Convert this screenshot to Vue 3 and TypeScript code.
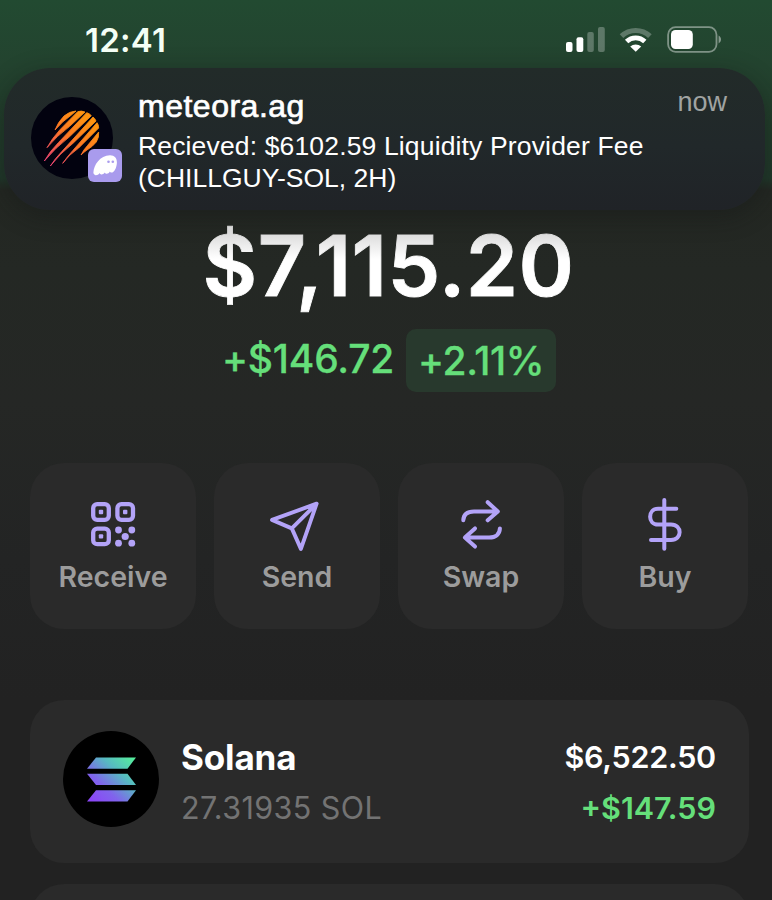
<script setup lang="ts">
interface Action {
  id: 'receive' | 'send' | 'swap' | 'buy'
  label: string
}

const actions: Action[] = [
  { id: 'receive', label: 'Receive' },
  { id: 'send', label: 'Send' },
  { id: 'swap', label: 'Swap' },
  { id: 'buy', label: 'Buy' },
]
</script>

<template>
  <main class="screen">
    <header class="status">
      <span class="time">12:41</span>
      <svg class="status-icons" width="156" height="28" viewBox="566 26 156 28">
        <g fill="#fff">
          <rect x="566" y="42" width="6.5" height="10" rx="2" />
          <rect x="576.5" y="37.3" width="6.8" height="14.7" rx="2" />
          <rect x="587.3" y="32" width="6.5" height="20" rx="2" opacity=".27" />
          <rect x="598" y="27" width="6.8" height="25" rx="2" opacity=".27" />
        </g>
        <path d="M621.5 36.200a20.500 20.500 0 0 1 28.400 0" fill="none" stroke="#fff" stroke-width="5.200" opacity=".27" />
        <path d="M626.600 41.400a13.300 13.300 0 0 1 18.200 0" fill="none" stroke="#fff" stroke-width="4.800" />
        <path d="M630.200 46.600a8 8 0 0 1 11 0l-5.500 5.200z" fill="#fff" />
        <rect x="668.100" y="27.200" width="48.400" height="24.600" rx="7.500" fill="none" stroke="#fff" stroke-opacity=".42" stroke-width="1.800" />
        <rect x="671" y="30" width="21.800" height="19" rx="4.500" fill="#fff" />
        <path d="M718.600 35.600c3.200 1.600 3.200 6.200 0 7.800z" fill="#fff" opacity=".45" />
      </svg>
    </header>

    <section class="notice">
      <div class="app-icon">
        <svg width="82" height="82" viewBox="-27 -27 246 246">
          <defs>
            <linearGradient id="meteor" gradientUnits="userSpaceOnUse" x1="140" y1="40" x2="20" y2="172">
              <stop offset="0" stop-color="#ff9410" />
              <stop offset=".4" stop-color="#fd7a22" />
              <stop offset=".7" stop-color="#f95e4c" />
              <stop offset="1" stop-color="#f5447c" />
            </linearGradient>
          </defs>
          <circle cx="96" cy="96" r="123" fill="#02020f" />
          <g fill="url(#meteor)" stroke="url(#meteor)" stroke-width="2.500" stroke-linejoin="round">
            <path d="M45 72Q54 48 72 30Q88 16 108 15L93 28Q68 45 45 72Z" />
            <path d="M21 125Q36 97 60 71L113 17Q124 13 135 18L89 61Q50 90 21 125Z" />
            <path d="M13 165Q30 135 55 110L140 20Q148 22 154 29L90 91Q44 127 13 165Z" />
            <path d="M31 180Q45 158 66 136L159 33Q165 37 168 45L100 111Q59 143 31 180Z" />
            <path d="M68 172Q81 153 98 134L171 50Q176 56 176 66L116 126Q87 146 68 172Z" />
            <path d="M123 147Q130 132 143 118L176 78Q178 93 169 108Q158 122 141 132Q132 138 123 147Z" />
          </g>
        </svg>
        <svg class="badge" width="34" height="33" viewBox="0 0 34 33">
          <rect width="34" height="33" rx="6" fill="#a99bed" />
          <path d="M5.400 23.500C5.700 16.200 12 6.200 22 6.200c4.600 0 7 3 6.900 7.300-.1 4.200-1.800 8.300-4 9.700-1.500.8-2.700.2-3-.6-1 1.700-2.300 2.500-3.700 2.200-.9-.2-1.200-.8-1.200-1.300-1.400 1.500-3 2.300-4.300 1.700-.7-.3-.9-.8-.9-1.300-1.500 1.700-3.200 2.700-4.700 2.100-1.100-.4-1.700-1.300-1.700-2.500z" fill="#fff" />
          <circle cx="20.500" cy="12.800" r="1.300" fill="#a99bed" />
          <circle cx="24.800" cy="12.800" r="1.300" fill="#a99bed" />
        </svg>
      </div>
      <div class="notice-text">
        <div class="notice-head">
          <strong>meteora.ag</strong>
          <span class="when">now</span>
        </div>
        <p><span class="line-one">Recieved: $6102.59 Liquidity Provider Fee</span><br /><span class="line-two">(CHILLGUY-SOL, 2H)</span></p>
      </div>
    </section>

    <section class="balance">
      <h1>$7,115.20</h1>
      <div class="change">
        <span class="amount">+$146.72</span>
        <span class="pill"><span class="percent">+2.11%</span></span>
      </div>
    </section>

    <nav class="actions">
      <button v-for="action in actions" :key="action.id" class="action" type="button">
        <svg v-if="action.id === 'receive'" width="56" height="56" viewBox="85 497 56 56" fill="none" stroke="currentColor" stroke-width="4.300">
          <rect x="93.200" y="504.200" width="15.600" height="15.600" rx="4" />
          <rect x="117.400" y="504.200" width="15.600" height="15.600" rx="4" />
          <rect x="93.200" y="528.600" width="15.600" height="15.600" rx="4" />
          <g fill="currentColor" stroke="none">
            <rect x="98.800" y="509.800" width="4.400" height="4.400" rx="1" />
            <rect x="123" y="509.800" width="4.400" height="4.400" rx="1" />
            <rect x="98.800" y="534.200" width="4.400" height="4.400" rx="1" />
            <circle cx="118.500" cy="530" r="3.400" />
            <circle cx="131.800" cy="530" r="3.400" />
            <circle cx="125.200" cy="536.500" r="3.600" />
            <circle cx="118.500" cy="543.200" r="3.400" />
            <circle cx="131.800" cy="543.200" r="3.400" />
          </g>
        </svg>
        <svg v-else-if="action.id === 'send'" width="56" height="56" viewBox="269 497 56 56" fill="none" stroke="currentColor" stroke-width="3.900" stroke-linejoin="round" stroke-linecap="round">
          <path d="M272 519.900L316.600 503.700L300.900 548.900L291.800 528.400ZM291.800 528.400L316.600 503.700" />
        </svg>
        <svg v-else-if="action.id === 'swap'" width="56" height="56" viewBox="453 497 56 56" fill="none" stroke="currentColor" stroke-width="4" stroke-linejoin="round" stroke-linecap="round">
          <path d="M463.300 520.300C463.500 514.500 467.500 511.500 474 511.500H497.500M487.700 502.200L497.800 511.500L487.700 520.300" />
          <path d="M499.900 528.400C499.700 534.200 495.700 537.600 489.200 537.600H465M475 528.400L464.900 537.600L475 546.600" />
        </svg>
        <svg v-else width="56" height="56" viewBox="637 497 56 56" fill="none" stroke="currentColor" stroke-width="4" stroke-linecap="round">
          <path d="M664.300 500V548.800M676.300 508.800H658C647.500 508.800 647.500 524.500 658 524.500H671C682.500 524.500 682.500 540 671 540H651" />
        </svg>
        <span class="label">{{ action.label }}</span>
      </button>
    </nav>

    <section class="tokens">
      <article class="token">
        <svg class="coin" width="96" height="96" viewBox="0 0 96 96">
          <defs>
            <linearGradient id="sol" gradientUnits="userSpaceOnUse" x1="28" y1="68" x2="68" y2="25">
              <stop offset="0" stop-color="#8b47f7" />
              <stop offset=".3" stop-color="#8064ec" />
              <stop offset=".65" stop-color="#57b9c2" />
              <stop offset="1" stop-color="#55ed9c" />
            </linearGradient>
          </defs>
          <circle cx="48" cy="48" r="48" fill="#000" />
          <g fill="url(#sol)">
            <path d="M33 26.500H73L64.500 37.700H24Z" />
            <path d="M24 42.800H64.500L73 54H33Z" />
            <path d="M33 59.200H73L64.500 70.400H24Z" />
          </g>
        </svg>
        <div class="names">
          <span class="name">Solana</span>
          <span class="holding">27.31935 SOL</span>
        </div>
        <div class="values">
          <span class="value">$6,522.50</span>
          <span class="gain">+$147.59</span>
        </div>
      </article>
      <article class="token"></article>
    </section>
  </main>
</template>

<style>
body {
  background: #222;
}
</style>

<style scoped>
.screen {
  box-sizing: border-box;
  width: 772px;
  height: 900px;
  overflow: hidden;
  font-family: Inter, sans-serif;
  color: #fff;
  background: linear-gradient(180deg, #224a31 0, #23432f 66px, #213c2a 130px, #20382a 178px, #232722 190px, #242824 270px, #252725 400px, #232424 560px, #222 700px, #222 100%);
}

.status {
  display: flex;
  align-items: center;
  justify-content: space-between;
  box-sizing: border-box;
  height: 68px;
  padding: 12px 50px 0 85px;
}

.time {
  font-size: 33px;
  font-weight: 600;
  letter-spacing: .250px;
  color: #f4fff5;
}

.notice {
  display: flex;
  box-sizing: border-box;
  width: 761px;
  height: 142px;
  margin-left: 4px;
  padding: 19px 38px 0 27px;
  border-radius: 46px;
  background: linear-gradient(180deg, #222b29 0%, #21282a 55%, #202327 100%);
  box-shadow: 0 6px 24px rgba(20, 22, 21, .42);
  font-family: "Liberation Sans", Arial, sans-serif;
}

.app-icon {
  position: relative;
  width: 82px;
  height: 82px;
  margin-top: 10px;
}

.app-icon svg {
  display: block;
}

.app-icon .badge {
  position: absolute;
  left: 57px;
  top: 52px;
}

.notice-text {
  flex: 1;
  margin-left: 25px;
  white-space: nowrap;
}

.notice-head {
  display: flex;
  justify-content: space-between;
  height: 43px;
  line-height: 39px;
}

.notice-head strong {
  font-size: 32px;
  font-weight: 400;
  letter-spacing: .500px;
  -webkit-text-stroke: .700px #fff;
}

.when {
  font-size: 27px;
  line-height: 30px;
  color: #a0a3a2;
}

.notice p {
  margin: 0;
  font-size: 26.500px;
  line-height: 32px;
}

.line-one {
  letter-spacing: .150px;
}

.balance {
  display: flex;
  flex-direction: column;
  align-items: center;
  padding-top: 13px;
}

h1 {
  margin: 0 0 -10px 5px;
  padding-bottom: 10px;
  font-size: 84px;
  font-weight: 600;
  letter-spacing: .400px;
  line-height: 85px;
  background: linear-gradient(180deg, #d8d8d8 8px, #fff 36px);
  background-clip: text;
  color: transparent;
  -webkit-text-stroke: .900px transparent;
}

.change {
  display: flex;
  align-items: center;
  gap: 12px;
  margin: 21px 0 0 6px;
  font-size: 39px;
  font-weight: 500;
  letter-spacing: -.200px;
  line-height: 48px;
  color: #65df7a;
  -webkit-text-stroke: .300px #65df7a;
}

.amount {
  margin-top: -3px;
}

.pill {
  display: flex;
  align-items: center;
  justify-content: center;
  width: 150px;
  height: 63px;
  border-radius: 10px;
  background: #28392d;
}

.percent {
  letter-spacing: -.400px;
}

.actions {
  display: grid;
  grid-template-columns: repeat(4, 1fr);
  gap: 18px;
  margin: 71px 24px 0 30px;
}

.action {
  display: flex;
  flex-direction: column;
  align-items: center;
  height: 166px;
  padding: 34px 0 0;
  border: 0;
  border-radius: 34px;
  background: #2a2a2a;
  color: #b3a3f8;
  font: inherit;
}

.label {
  margin-top: 6px;
  font-size: 28.500px;
  font-weight: 600;
  line-height: 36px;
  color: #9c9c9c;
}

.tokens {
  display: flex;
  flex-direction: column;
  gap: 21px;
  margin: 71px 23px 0 30px;
}

.token {
  display: flex;
  box-sizing: border-box;
  height: 163px;
  padding: 31px 33px 0;
  border-radius: 34px;
  background: #2a2a2a;
}

.names,
.values {
  display: flex;
  flex-direction: column;
  line-height: 52px;
  white-space: nowrap;
}

.names {
  margin-left: 22px;
}

.values {
  flex: 1;
  align-items: flex-end;
}

.name {
  font-size: 35px;
  font-weight: 700;
  letter-spacing: -.150px;
}

.holding {
  font-size: 30.500px;
  letter-spacing: .400px;
  line-height: 50px;
  color: #737373;
}

.value {
  font-size: 30.500px;
  font-weight: 600;
  letter-spacing: -.250px;
}

.gain {
  font-size: 30.500px;
  font-weight: 600;
  line-height: 50px;
  color: #65df7a;
}
</style>
